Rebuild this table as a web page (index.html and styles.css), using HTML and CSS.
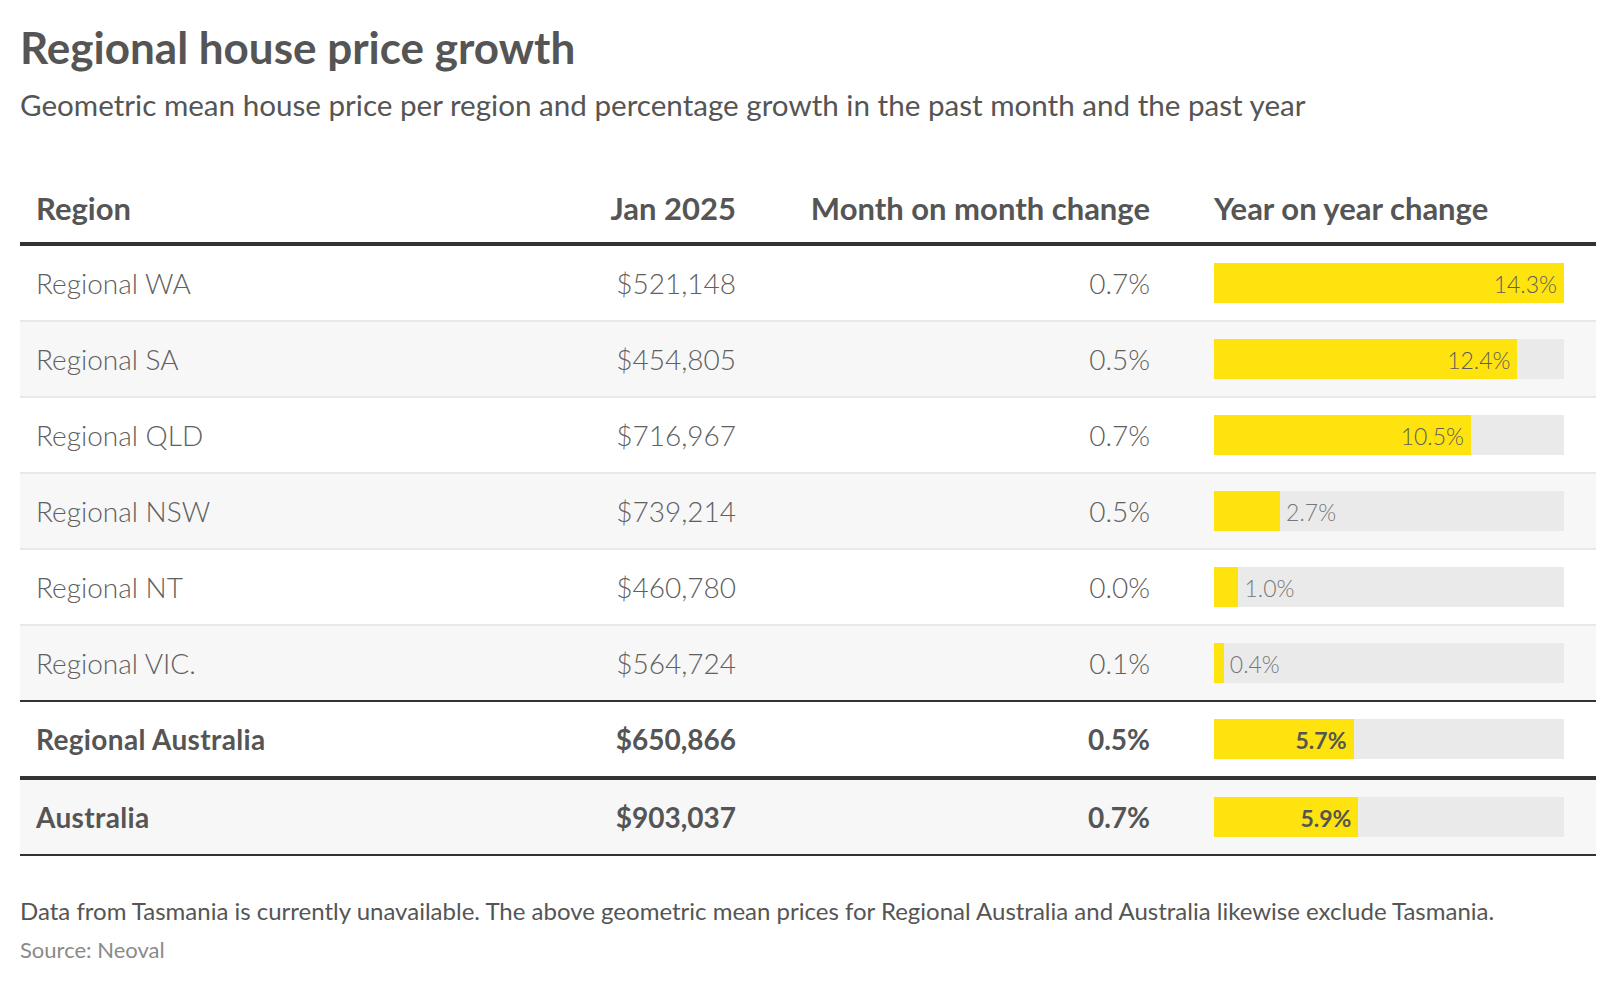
FILE: index.html
```html
<!DOCTYPE html>
<html lang="en">
<head>
<meta charset="utf-8">
<title>Regional house price growth</title>
<link rel="stylesheet" href="styles.css">
</head>
<body>
<main class="chart">
  <h1 class="title">Regional house price growth</h1>
  <p class="subtitle">Geometric mean house price per region and percentage growth in the past month and the past year</p>

  <div class="table">
    <div class="row head">
      <div class="cell">Region</div>
      <div class="cell num">Jan 2025</div>
      <div class="cell num">Month on month change</div>
      <div class="cell bar-cell">Year on year change</div>
    </div>

    <div class="row">
      <div class="cell">Regional WA</div>
      <div class="cell num">$521,148</div>
      <div class="cell num">0.7%</div>
      <div class="cell bar-cell"><div class="track"><div class="fill" style="width:100%"><span class="lbl">14.3%</span></div></div></div>
    </div>
    <div class="row alt">
      <div class="cell">Regional SA</div>
      <div class="cell num">$454,805</div>
      <div class="cell num">0.5%</div>
      <div class="cell bar-cell"><div class="track"><div class="fill" style="width:86.71%"><span class="lbl">12.4%</span></div></div></div>
    </div>
    <div class="row">
      <div class="cell">Regional QLD</div>
      <div class="cell num">$716,967</div>
      <div class="cell num">0.7%</div>
      <div class="cell bar-cell"><div class="track"><div class="fill" style="width:73.43%"><span class="lbl">10.5%</span></div></div></div>
    </div>
    <div class="row alt">
      <div class="cell">Regional NSW</div>
      <div class="cell num">$739,214</div>
      <div class="cell num">0.5%</div>
      <div class="cell bar-cell"><div class="track"><div class="fill" style="width:18.88%"></div><span class="lbl out">2.7%</span></div></div>
    </div>
    <div class="row">
      <div class="cell">Regional NT</div>
      <div class="cell num">$460,780</div>
      <div class="cell num">0.0%</div>
      <div class="cell bar-cell"><div class="track"><div class="fill" style="width:6.99%"></div><span class="lbl out">1.0%</span></div></div>
    </div>
    <div class="row alt last">
      <div class="cell">Regional VIC.</div>
      <div class="cell num">$564,724</div>
      <div class="cell num">0.1%</div>
      <div class="cell bar-cell"><div class="track"><div class="fill" style="width:2.8%"></div><span class="lbl out">0.4%</span></div></div>
    </div>
    <div class="row total sub">
      <div class="cell name">Regional Australia</div>
      <div class="cell num">$650,866</div>
      <div class="cell num">0.5%</div>
      <div class="cell bar-cell"><div class="track"><div class="fill" style="width:39.86%"><span class="lbl">5.7%</span></div></div></div>
    </div>
    <div class="row total alt grand">
      <div class="cell name">Australia</div>
      <div class="cell num">$903,037</div>
      <div class="cell num">0.7%</div>
      <div class="cell bar-cell"><div class="track"><div class="fill" style="width:41.26%"><span class="lbl">5.9%</span></div></div></div>
    </div>
  </div>

  <p class="note">Data from Tasmania is currently unavailable. The above geometric mean prices for Regional Australia and Australia likewise exclude Tasmania.</p>
  <p class="source">Source: Neoval</p>
</main>
</body>
</html>
```

FILE: styles.css
```css
body {
  margin: 0;
  background: #ffffff;
  font-family: Lato, "Open Sans", sans-serif;
  color: #555555;
}

.chart {
  padding: 20px 20px 0;
}

.title {
  margin: 0;
  font-size: 44px;
  line-height: 54px;
  font-weight: 700;
  color: #555555;
}

.subtitle {
  margin: 13px 0 0;
  font-size: 29.6px;
  line-height: 36px;
  font-weight: 400;
  color: #555555;
}

.table {
  margin-top: 67px;
}

.row {
  display: grid;
  grid-template-columns: 380px 350px 415px 1fr;
  align-items: center;
  height: 74px;
  border-bottom: 2px solid #e9e9e9;
  font-size: 28px;
  font-weight: 300;
  color: #606060;
}

.row.alt {
  background: #f7f7f7;
}

.row.head {
  align-items: end;
  font-size: 31px;
  line-height: 36px;
  font-weight: 700;
  color: #555555;
  border-bottom: 4px solid #333333;
  box-sizing: border-box;
  height: 56px;
  padding-bottom: 16px;
}

.row.last {
  border-bottom-color: #333333;
}

.row.total {
  font-weight: 700;
  color: #555555;
}

.row.total .name {
  letter-spacing: 0.35px;
}

.row.sub {
  border-bottom: 4px solid #333333;
}

.row.grand {
  border-bottom: 2px solid #333333;
}

.cell {
  padding: 0 16px;
  white-space: nowrap;
}

.num {
  text-align: right;
}

.cell.num:nth-child(2) {
  padding-right: 14px;
}

.cell.num:nth-child(3) {
  padding-right: 15px;
}

.bar-cell {
  padding: 0 32px 0 49px;
}

.track {
  display: flex;
  align-items: center;
  height: 40px;
  background: #eaeaea;
}

.fill {
  display: flex;
  align-items: center;
  justify-content: flex-end;
  height: 100%;
  background: #ffe30f;
  box-sizing: border-box;
}

.lbl {
  font-size: 23px;
  font-weight: 300;
  color: #5e5e5e;
  padding: 2px 7px 0 0;
}

.lbl.out {
  padding: 2px 0 0 6px;
  color: #777777;
}

.total .lbl {
  font-weight: 700;
  color: #555555;
}

.note {
  margin: 40px 0 0;
  font-size: 24px;
  line-height: 29px;
  color: #555555;
}

.source {
  margin: 11px 0 0;
  font-size: 22px;
  line-height: 27px;
  color: #8a8a8a;
}
```
